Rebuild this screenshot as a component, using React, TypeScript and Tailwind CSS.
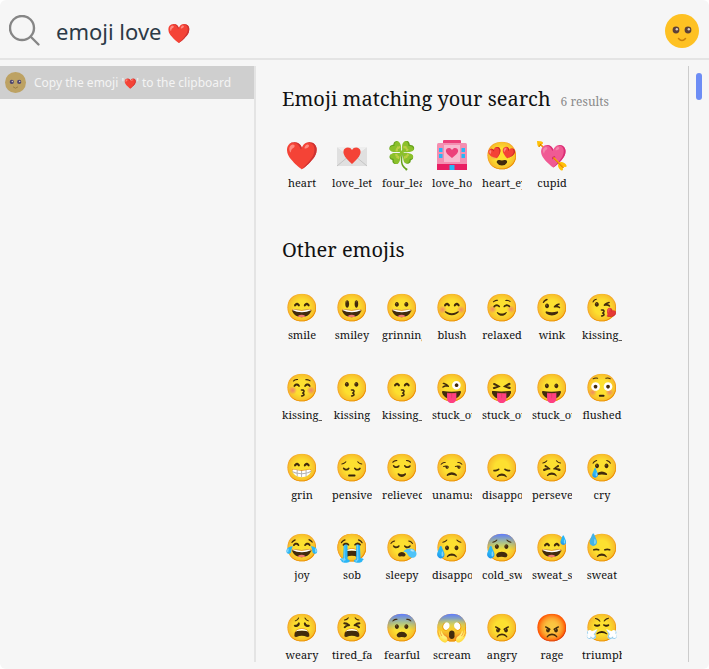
import type { ReactNode } from "react"

function LoveLetter() {
  return (
    <svg className="w-[32px] h-[32px]" viewBox="0 0 32 32">
      <path d="M1 8 L16 19 L31 8 V27 H1 Z" fill="#e0e0e0" />
      <path d="M1 8 L16 19 L31 8 L26 8 H6 Z" fill="#eeeeee" />
      <path d="M1 27 L13 17 M31 27 L19 17" stroke="#bdbdbd" strokeWidth="0.8" />
      <path d="M16 25 C9 19 7 15 7.500 12 C8 8 14 7 16 11 C18 7 24 8 24.500 12 C25 15 23 19 16 25 Z" fill="#f44336" />
    </svg>
  )
}

function LoveHotel() {
  return (
    <svg className="w-[32px] h-[32px]" viewBox="0 0 32 32">
      <rect x="7" y="1" width="18" height="5" rx="1" fill="#ec407a" />
      <rect x="1" y="4" width="30" height="22" rx="1.500" fill="#f48fb1" />
      <rect x="8" y="6" width="16" height="17" fill="#f8bbd0" />
      <path d="M16 19 C10.500 15 9.500 13 10 11 C10.500 8.500 14.500 8 16 11 C17.500 8 21.500 8.500 22 11 C22.500 13 21.500 15 16 19 Z" fill="#ec407a" />
      <rect x="3" y="9" width="3.500" height="4" fill="#29b6f6" />
      <rect x="3" y="15" width="3.500" height="4" fill="#29b6f6" />
      <rect x="25.500" y="9" width="3.500" height="4" fill="#29b6f6" />
      <rect x="25.500" y="15" width="3.500" height="4" fill="#29b6f6" />
      <rect x="1" y="25" width="30" height="6" fill="#e91e63" />
      <rect x="13.500" y="26" width="5" height="5" fill="#29b6f6" />
    </svg>
  )
}

const matches: [ReactNode, string][] = [
  ["❤️", "heart"],
  [<LoveLetter />, "love_letter"],
  ["🍀", "four_leaf_clover"],
  [<LoveHotel />, "love_hotel"],
  ["😍", "heart_eyes"],
  ["💘", "cupid"],
]

const others = [
  ["😄", "smile"],
  ["😃", "smiley"],
  ["😀", "grinning"],
  ["😊", "blush"],
  ["☺️", "relaxed"],
  ["😉", "wink"],
  ["😘", "kissing_heart"],
  ["😚", "kissing_closed_eyes"],
  ["😗", "kissing"],
  ["😙", "kissing_smiling_eyes"],
  ["😜", "stuck_out_tongue_winking_eye"],
  ["😝", "stuck_out_tongue_closed_eyes"],
  ["😛", "stuck_out_tongue"],
  ["😳", "flushed"],
  ["😁", "grin"],
  ["😔", "pensive"],
  ["😌", "relieved"],
  ["😒", "unamused"],
  ["😞", "disappointed"],
  ["😣", "persevere"],
  ["😢", "cry"],
  ["😂", "joy"],
  ["😭", "sob"],
  ["😪", "sleepy"],
  ["😥", "disappointed_relieved"],
  ["😰", "cold_sweat"],
  ["😅", "sweat_smile"],
  ["😓", "sweat"],
  ["😩", "weary"],
  ["😫", "tired_face"],
  ["😨", "fearful"],
  ["😱", "scream"],
  ["😠", "angry"],
  ["😡", "rage"],
  ["😤", "triumph"],
]

function Face({ className, skin, eye, mouth }: { className: string; skin: string; eye: string; mouth: string }) {
  return (
    <svg className={className} viewBox="0 0 34 34">
      <circle cx="17" cy="17" r="17" fill={skin} />
      <circle cx="11" cy="16" r="3.400" fill={eye} />
      <circle cx="23" cy="16" r="3.400" fill={eye} />
      <circle cx="11.800" cy="15.200" r="1.200" fill="#d7ccc8" />
      <circle cx="23.800" cy="15.200" r="1.200" fill="#d7ccc8" />
      <path d="M13.500 24.500 Q17 28.500 20.500 24.500" fill="none" stroke={mouth} strokeWidth="1.500" strokeLinecap="round" />
    </svg>
  )
}

function EmojiCell({ emoji, name }: { emoji: ReactNode; name: string }) {
  return (
    <div className="w-10 h-[70px] flex flex-col items-center">
      <div className="h-[36px] flex items-center justify-center text-[27px] leading-[36px] whitespace-nowrap">{emoji}</div>
      <div className="w-10 mt-[2px] overflow-hidden whitespace-nowrap text-center text-[11px] leading-[16px] text-[#111111]">{name}</div>
    </div>
  )
}

export default function App() {
  return (
    <div className="w-[709px] h-[669px] overflow-hidden rounded-md bg-[#f6f6f6] font-['Noto_Sans',sans-serif]">
      {/* Search bar */}
      <div className="h-[60px] flex items-center pl-[9px] pr-[10px] border-b-2 border-[#e4e4e4]">
        <svg className="w-[32px] h-[32px] mt-[3px]" viewBox="0 0 32 32" fill="none" stroke="#868686">
          <circle cx="13" cy="13" r="12" strokeWidth="2.400" />
          <path d="M22 22 L29.500 29.500" strokeWidth="2.400" strokeLinecap="round" />
        </svg>
        <div className="ml-[15px] flex-1 mt-[5px] text-[22px] text-[#2c3a47]">
          emoji love <span className="text-[19px]">❤️</span>
        </div>
        <Face className="w-[34px] h-[34px] mt-[4px]" skin="#fec123" eye="#5d4037" mouth="#c87f0a" />
      </div>

      <div className="flex h-[609px] pt-[6px] pb-[7px]">
        {/* Results list */}
        <div className="w-[256px] shrink-0 border-r-2 border-[#e4e4e4]">
          <div className="h-[33px] flex items-center pl-[5px] bg-[#cfcfcf]">
            <Face className="w-[21px] h-[21px]" skin="#bda263" eye="#4d4670" mouth="#96793f" />
            <span className="ml-[8px] text-xs text-[#f4f4f4]">
              Copy the emoji '<span className="text-[10px]">❤️</span>' to the clipboard
            </span>
          </div>
        </div>

        {/* Emoji panel */}
        <div className="w-[433px] shrink-0 border-r border-[#cccccc] pl-[26px] font-['Noto_Serif',serif] overflow-hidden">
          <div className="flex items-baseline mt-[15px]">
            <h2 className="text-xl leading-[36px] text-[#111111]">Emoji matching your search</h2>
            <span className="ml-[10px] text-xs text-[#8a8a8a]">6 results</span>
          </div>
          <div className="grid grid-cols-[repeat(7,40px)] gap-x-[10px] mt-[20px]">
            {matches.map(([emoji, name]) => (
              <EmojiCell key={name} emoji={emoji} name={name} />
            ))}
          </div>
          <h2 className="text-xl leading-[36px] text-[#111111] mt-[25px]">Other emojis</h2>
          <div className="grid grid-cols-[repeat(7,40px)] gap-x-[10px] gap-y-[10px] mt-[21px]">
            {others.map(([emoji, name]) => (
              <EmojiCell key={name} emoji={emoji} name={name} />
            ))}
          </div>
        </div>

        {/* Scrollbar */}
        <div className="flex-1 pl-[7px] pt-[7px]">
          <div className="w-[6px] h-[27px] rounded-full bg-[#6d8df5]" />
        </div>
      </div>
    </div>
  )
}
